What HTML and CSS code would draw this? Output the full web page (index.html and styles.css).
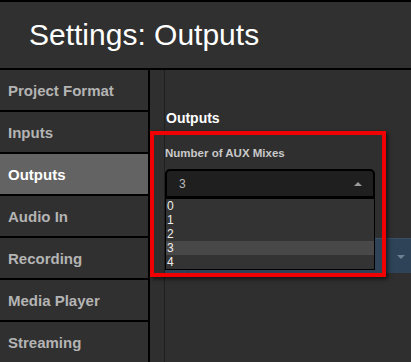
FILE: index.html
```html
<!DOCTYPE html>
<html lang="en">

<head>
    <meta charset="UTF-8">
    <meta name="viewport" content="width=device-width, initial-scale=1.0">
    <link rel="stylesheet" href="styles.css">
    <title>Settings: Outputs</title>
</head>

<body>
    <div class="header">
        <h1>Settings: Outputs</h1>
    </div>

    <div class="main">
        <ul class="sidebar">
            <li>Project Format</li>
            <li>Inputs</li>
            <li class="active">Outputs</li>
            <li>Audio In</li>
            <li>Recording</li>
            <li>Media Player</li>
            <li>Streaming</li>
        </ul>

        <div class="content">
            <div class="panel">
                <h2>Outputs</h2>
                <label class="field-label">Number of AUX Mixes</label>
                <div class="select-wrap">
                    <div class="select">
                        <span>3</span>
                        <span class="arrow-up"></span>
                    </div>
                    <ul class="options">
                        <li>0</li>
                        <li>1</li>
                        <li>2</li>
                        <li class="hover">3</li>
                        <li>4</li>
                    </ul>
                </div>
                <div class="next-row">
                    <div class="next-cell"></div>
                    <span class="arrow-down"></span>
                </div>
            </div>
            <!-- annotation box -->
            <div class="highlight"></div>
        </div>
    </div>
</body>

</html>
```

FILE: styles.css
```css
* {
    margin: 0;
    padding: 0;
    box-sizing: border-box;
}

body {
    width: 411px;
    height: 362px;
    overflow: hidden;
    background: #2f2f2f;
    font-family: 'Liberation Sans', Arial, sans-serif;
}

.header {
    height: 70px;
    display: flex;
    align-items: center;
    padding-left: 29px;
    background: #303030;
    border-top: 2px solid #000;
    border-bottom: 2px solid #000;
}

.header h1 {
    color: #fff;
    font-size: 30px;
    font-weight: normal;
}

.main {
    display: flex;
    height: 292px;
}

.sidebar {
    width: 150px;
    list-style: none;
    border-right: 2px solid #000;
}

.sidebar li {
    height: 42px;
    display: flex;
    align-items: center;
    padding-left: 8px;
    color: #b4b4b4;
    font-size: 15px;
    font-weight: bold;
    background: #303030;
    border-bottom: 2px solid #000;
}

.sidebar li.active {
    color: #fff;
    background: #636363;
}

.content {
    flex: 1;
    position: relative;
    background: #2f2f2f;
}

.panel {
    height: 100%;
    margin-left: 14px;
    padding-top: 40px;
    border-left: 1px solid #1f1f1f;
}

.panel h2 {
    color: #fff;
    font-size: 14px;
    line-height: 16px;
    padding-left: 1px;
}

.field-label {
    display: block;
    margin-top: 19px;
    color: #c9c9c9;
    font-size: 11.5px;
    font-weight: bold;
    line-height: 16px;
}

.select-wrap {
    position: relative;
    width: 210px;
    margin-top: 8px;
}

.select {
    height: 29px;
    display: flex;
    align-items: center;
    justify-content: space-between;
    padding: 0 11px 0 12px;
    color: #bbb;
    font-size: 12px;
    background: #1f1f1f;
    border: 2px solid #000;
    border-radius: 5px 5px 0 0;
}

.arrow-up {
    width: 0;
    height: 0;
    border-left: 4px solid transparent;
    border-right: 4px solid transparent;
    border-bottom: 4px solid #9a9a9a;
}

.options {
    position: absolute;
    top: 29px;
    left: 0;
    width: 210px;
    z-index: 2;
    list-style: none;
    background: #333;
    border: 1px solid #000;
}

.options li {
    height: 14px;
    line-height: 14px;
    padding-left: 1px;
    color: #eee;
    font-size: 12px;
}

.options li.hover {
    background: #484848;
}

.next-row {
    height: 35px;
    margin-top: 40px;
    display: flex;
    align-items: center;
    justify-content: space-between;
    padding-right: 6px;
    background: #2e4357;
    border-top: 1px solid #3a5064;
}

.next-cell {
    width: 24px;
    height: 100%;
    border-right: 1px solid #25384a;
}

.arrow-down {
    width: 0;
    height: 0;
    margin-top: 2px;
    border-left: 4px solid transparent;
    border-right: 4px solid transparent;
    border-top: 4px solid #6f8091;
}

.highlight {
    position: absolute;
    top: 61px;
    left: 0;
    width: 236px;
    height: 146px;
    z-index: 3;
    border: 4px solid #f00000;
    box-shadow: 2px 2px 4px rgba(0, 0, 0, 0.6);
}
```
